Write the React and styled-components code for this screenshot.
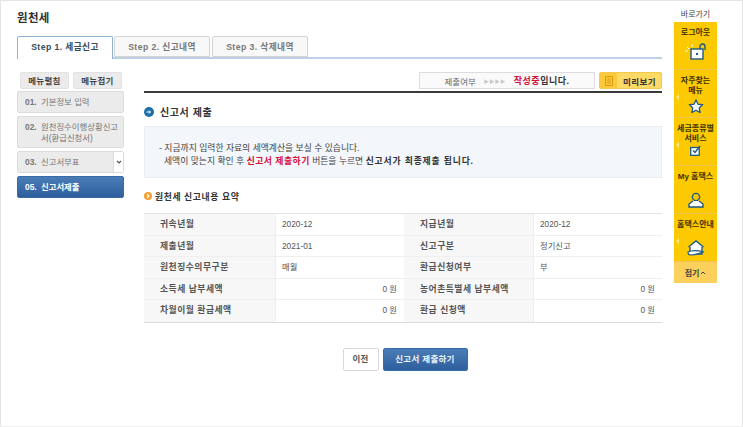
import React from "react";
import styled, { createGlobalStyle } from "styled-components";

const Global = createGlobalStyle`
  html, body { margin: 0; padding: 0; background: #fff; }
  body { font-family: "Liberation Sans", "Noto Sans CJK KR", sans-serif; font-size: 9px; color: #444; }
  * { box-sizing: border-box; }
`;

const Page = styled.div`
  width: 743px;
  height: 427px;
  border: 1px solid #e4e4e4;
  border-bottom-color: #eee;
  display: flex;
  overflow: hidden;
`;

const Main = styled.div`
  width: 661px;
  padding: 0 0 0 16px;
`;

const Title = styled.h1`
  margin: 10px 0 0;
  height: 15px;
  line-height: 15px;
  font-size: 11.5px;
  font-weight: 700;
  letter-spacing: 0.3px;
  color: #333;
`;

const Tabs = styled.div`
  display: flex;
  gap: 1px;
  margin-top: 10px;
  height: 23px;
  border-bottom: 2px solid #bcd0e6;
`;

const Tab = styled.div`
  width: 96px;
  margin-left: ${(p) => (p.$gap ? "1px" : "0")};
  height: ${(p) => (p.$active ? "23px" : "21px")};
  border: 1px solid ${(p) => (p.$active ? "#8fb2d6" : "#d4d4d4")};
  border-bottom: ${(p) => (p.$active ? "none" : "1px solid #d4d4d4")};
  border-radius: 2px 2px 0 0;
  background: ${(p) => (p.$active ? "#fff" : "#f8f8f8")};
  color: ${(p) => (p.$active ? "#3a4a5a" : "#777")};
  font-size: 8.7px;
  font-weight: 700;
  letter-spacing: 0.4px;
  text-align: center;
  line-height: 21px;
  white-space: nowrap;
`;

const Body = styled.div`
  display: flex;
  gap: 20px;
  margin-top: 13px;
`;

const Side = styled.div`
  width: 107px;
  flex: none;
  display: flex;
  flex-direction: column;
`;

const SideButtons = styled.div`
  display: flex;
  gap: 4px;
  padding-left: 3px;
  margin-bottom: 2px;
`;

const SideButton = styled.div`
  width: 49px;
  height: 17px;
  line-height: 16px;
  background: #ebebeb;
  border: 1px solid #e2e2e2;
  border-radius: 2px;
  text-align: center;
  font-size: 8.5px;
  font-weight: 700;
  letter-spacing: 0.3px;
  color: #444;
`;

const MenuItem = styled.div`
  position: relative;
  height: ${(p) => (p.$tall ? "32px" : "22px")};
  margin-bottom: 3px;
  padding: ${(p) => (p.$tall ? "5px 0 0 7px" : "0 2px 0 7px")};
  display: flex;
  align-items: ${(p) => (p.$tall ? "flex-start" : "center")};
  background: ${(p) => (p.$active ? "linear-gradient(#4a7cb6, #2e5f9d)" : "#ebebeb")};
  border: 1px solid ${(p) => (p.$active ? "#3b6ba6" : "#dcdcdc")};
  border-radius: 2px;
  color: ${(p) => (p.$active ? "#fff" : "#777")};
  font-size: 8.4px;
  font-weight: ${(p) => (p.$active ? 700 : 400)};
  line-height: 11px;
`;

const MenuNum = styled.span`
  flex: none;
  width: 16px;
  font-weight: 700;
`;

const MenuToggle = styled.span`
  position: absolute;
  top: 0;
  right: 0;
  bottom: 0;
  width: 10px;
  background: #fff;
  border-left: 1px solid #dcdcdc;
  display: flex;
  align-items: center;
  justify-content: center;
`;

const Content = styled.div`
  width: 518px;
  flex: none;
`;

const StatusRow = styled.div`
  display: flex;
  justify-content: flex-end;
  gap: 4px;
  height: 21px;
  padding-bottom: 3px;
  border-bottom: 2px solid #3a3a3a;
`;

const StatusBox = styled.div`
  width: 176px;
  height: 17px;
  border: 1px solid #ddd;
  background: #fafafa;
  display: flex;
  align-items: center;
  justify-content: center;
  gap: 8px;
  font-size: 8.5px;
  color: #666;
`;

const Arrows = styled.span`
  color: #c8c8c8;
  font-size: 5px;
  letter-spacing: 0.5px;
`;

const StatusText = styled.span`
  font-weight: 700;
  font-size: 9px;
  letter-spacing: 0.5px;
  color: #333;
`;

const Red = styled.span`
  color: #d5103c;
  font-weight: 700;
  letter-spacing: 0.5px;
`;

const Preview = styled.div`
  width: 63px;
  height: 17px;
  background: #fdd966;
  border: 1px solid #f3c94d;
  border-radius: 2px;
  display: flex;
  align-items: center;
  font-size: 8.5px;
  font-weight: 700;
  letter-spacing: 0.4px;
  color: #333;
`;

const PreviewIcon = styled.span`
  width: 17px;
  height: 15px;
  background: #fbc93a;
  display: flex;
  align-items: center;
  justify-content: center;
  margin-right: 6px;
`;

const Heading = styled.h2`
  margin: 11px 0 0;
  height: 15px;
  display: flex;
  align-items: center;
  gap: 6px;
  font-size: 10px;
  font-weight: 700;
  letter-spacing: 0.6px;
  color: #333;
`;

const NoticeBox = styled.div`
  margin-top: 7px;
  height: 52px;
  padding: 15px 0 0 14px;
  background: #f3f6fa;
  border: 1px solid #e9edf2;
  font-size: 8.8px;
  line-height: 13px;
  color: #444;
`;

const NoticeLine = styled.div`
  padding-left: ${(p) => (p.$indent ? "5px" : "0")};
  white-space: nowrap;
`;

const Strong = styled.b`
  color: #333;
  letter-spacing: 0.85px;
`;

const SubHeading = styled.h3`
  margin: 11px 0 0;
  height: 14px;
  display: flex;
  align-items: center;
  gap: 3px;
  font-size: 8.8px;
  font-weight: 700;
  letter-spacing: 0.6px;
  color: #333;
`;

const SummaryTable = styled.div`
  margin-top: 10px;
  border-top: 1px solid #e2e2e2;
  border-bottom: 1px solid #dcdcdc;
  display: grid;
  grid-template-columns: 131px 129px 129px 129px;
`;

const Label = styled.div`
  height: 21.6px;
  line-height: 21px;
  padding-left: 16px;
  background: #f7f7f7;
  border-bottom: ${(p) => (p.$last ? "none" : "1px solid #efefef")};
  font-size: 8.8px;
  font-weight: 700;
  letter-spacing: 0.5px;
  color: #555;
  white-space: nowrap;
`;

const Value = styled.div`
  height: 21.6px;
  line-height: 21px;
  padding: 0 7px 0 6px;
  background: #fff;
  border-bottom: ${(p) => (p.$last ? "none" : "1px solid #efefef")};
  border-left: 1px solid #efefef;
  font-size: 8.3px;
  color: #555;
  text-align: ${(p) => (p.$right ? "right" : "left")};
`;

const Actions = styled.div`
  margin-top: 25px;
  display: flex;
  justify-content: center;
  gap: 4px;
  padding-left: 4px;
`;

const Button = styled.div`
  height: 23px;
  line-height: 21px;
  width: ${(p) => (p.$primary ? "85px" : "36px")};
  border: 1px solid ${(p) => (p.$primary ? "#3b6ba6" : "#d8d8d8")};
  border-radius: 2px;
  background: ${(p) => (p.$primary ? "linear-gradient(#4a7cb6, #2e5f9d)" : "#fff")};
  color: ${(p) => (p.$primary ? "#eef4fb" : "#555")};
  text-align: center;
  font-size: 8.5px;
  font-weight: 700;
  letter-spacing: 0.3px;
`;

const QuickBar = styled.div`
  width: 43px;
  margin: 7px 0 0 12px;
  flex: none;
`;

const QuickTitle = styled.div`
  height: 14px;
  line-height: 14px;
  text-align: center;
  font-size: 8px;
  color: #444;
`;

const QuickItem = styled.div`
  position: relative;
  height: 48px;
  background: #fdc900;
  border-bottom: 1px solid #eec35a;
  padding-top: 6px;
  text-align: center;
  font-size: 8px;
  font-weight: 700;
  line-height: 10px;
  color: #3a3200;
  white-space: nowrap;
`;

const QuickIcon = styled.svg`
  position: absolute;
  left: 50%;
  bottom: ${(p) => p.$b}px;
  transform: translateX(-50%);
`;

const Pointer = styled.span`
  position: absolute;
  left: 2px;
  top: 24px;
  border: 3px solid transparent;
  border-left-width: 0;
  border-right: 3px solid #ffe98a;
`;

const Fold = styled.div`
  height: 21px;
  background: #fdd05c;
  display: flex;
  align-items: center;
  justify-content: center;
  gap: 1px;
  font-size: 8px;
  font-weight: 700;
  color: #444;
`;

const blue = "#1d5a85";

const rows = [
  ["귀속년월", "2020-12", "지급년월", "2020-12"],
  ["제출년월", "2021-01", "신고구분", "정기신고"],
  ["원천징수의무구분", "매월", "환급신청여부", "부"],
  ["소득세 납부세액", "0 원", "농어촌특별세 납부세액", "0 원", true],
  ["차월이월 환급세액", "0 원", "환급 신청액", "0 원", true],
];

export default function App() {
  return (
    <Page>
      <Global />
      <Main>
        <Title>원천세</Title>
        <Tabs>
          <Tab $active>Step 1. 세금신고</Tab>
          <Tab>Step 2. 신고내역</Tab>
          <Tab $gap>Step 3. 삭제내역</Tab>
        </Tabs>
        <Body>
          <Side>
            <SideButtons>
              <SideButton>메뉴펼침</SideButton>
              <SideButton>메뉴접기</SideButton>
            </SideButtons>
            <MenuItem><MenuNum>01.</MenuNum>기본정보 입력</MenuItem>
            <MenuItem $tall><MenuNum>02.</MenuNum><span>원천징수이행상황신고서(환급신청서)</span></MenuItem>
            <MenuItem>
              <MenuNum>03.</MenuNum>신고서부표
              <MenuToggle>
                <svg width="6" height="4" viewBox="0 0 6 4"><path d="M1 1l2 2 2-2" fill="none" stroke="#555" strokeWidth="1.2" /></svg>
              </MenuToggle>
            </MenuItem>
            <MenuItem $active><MenuNum>05.</MenuNum>신고서제출</MenuItem>
          </Side>
          <Content>
            <StatusRow>
              <StatusBox>
                <span>제출여부</span>
                <Arrows>▶▶▶▶</Arrows>
                <StatusText><Red>작성중</Red>입니다.</StatusText>
              </StatusBox>
              <Preview>
                <PreviewIcon>
                  <svg width="8" height="10" viewBox="0 0 8 10"><path d="M.5.5h7v9h-7zM2 3h4M2 5h4M2 7h4" fill="none" stroke="#d99a10" /></svg>
                </PreviewIcon>
                미리보기
              </Preview>
            </StatusRow>
            <Heading>
              <svg width="10" height="10" viewBox="0 0 10 10">
                <circle cx="5" cy="5" r="5" fill="#1f6fa8" />
                <path d="M2.5 5h4M5 3.5L6.5 5 5 6.5" fill="none" stroke="#fff" strokeWidth="1" />
              </svg>
              신고서 제출
            </Heading>
            <NoticeBox>
              <NoticeLine>- 지금까지 입력한 자료의 세액계산을 보실 수 있습니다.</NoticeLine>
              <NoticeLine $indent>세액이 맞는지 확인 후 <Red>신고서 제출하기</Red> 버튼을 누르면 <Strong>신고서가 최종제출 됩니다.</Strong></NoticeLine>
            </NoticeBox>
            <SubHeading>
              <svg width="8" height="8" viewBox="0 0 8 8">
                <circle cx="4" cy="4" r="4" fill="#f0a030" />
                <path d="M3 2l2 2-2 2" fill="none" stroke="#fff" strokeWidth="1.1" />
              </svg>
              원천세 신고내용 요약
            </SubHeading>
            <SummaryTable>
              {rows.map((r, i) => (
                <React.Fragment key={r[0]}>
                  <Label $last={i === 4}>{r[0]}</Label>
                  <Value $last={i === 4} $right={r[4]}>{r[1]}</Value>
                  <Label $last={i === 4}>{r[2]}</Label>
                  <Value $last={i === 4} $right={r[4]}>{r[3]}</Value>
                </React.Fragment>
              ))}
            </SummaryTable>
            <Actions>
              <Button>이전</Button>
              <Button $primary>신고서 제출하기</Button>
            </Actions>
          </Content>
        </Body>
      </Main>
      <QuickBar>
        <QuickTitle>바로가기</QuickTitle>
        <QuickItem>
          로그아웃
          <QuickIcon $b={9} width="22" height="17" viewBox="0 0 22 17">
            <rect x="6" y="6" width="12" height="10" fill="#fff" stroke={blue} strokeWidth="1.4" />
            <rect x="11" y="10" width="2" height="2" fill={blue} />
            <path d="M15 6V3.5a2.5 2.5 0 0 1 5 0V7" fill="none" stroke={blue} strokeWidth="1.4" />
            <path d="M0 8h3M2 4l2 2M7 1v3" stroke="#fff" strokeWidth="1" />
          </QuickIcon>
        </QuickItem>
        <QuickItem>
          자주찾는<br />메뉴
          <Pointer />
          <QuickIcon $b={4} width="15" height="14" viewBox="0 0 15 14">
            <path d="M7.5 1l2 4.2 4.6.6-3.4 3.2.9 4.5-4.1-2.3-4.1 2.3.9-4.5L.9 5.8l4.6-.6z" fill="#fff" stroke={blue} strokeWidth="1.3" />
          </QuickIcon>
        </QuickItem>
        <QuickItem>
          세금종류별<br />서비스
          <Pointer />
          <QuickIcon $b={9} width="12" height="11" viewBox="0 0 12 11">
            <rect x=".7" y="2.5" width="8.5" height="7.8" fill="#fff" stroke={blue} strokeWidth="1.3" />
            <path d="M3 5.5l2 2 5-6.5" fill="none" stroke={blue} strokeWidth="1.4" />
          </QuickIcon>
        </QuickItem>
        <QuickItem>
          My 홈택스
          <QuickIcon $b={5} width="16" height="16" viewBox="0 0 16 16">
            <circle cx="8" cy="5" r="3.6" fill="#fdc900" stroke={blue} strokeWidth="1.4" />
            <path d="M5 9L1 12v3h14v-3l-4-3" fill="#fff" stroke={blue} strokeWidth="1.4" />
          </QuickIcon>
        </QuickItem>
        <QuickItem>
          홈택스안내
          <Pointer />
          <QuickIcon $b={5} width="18" height="16" viewBox="0 0 18 16">
            <path d="M1.5 7L9 1l7.5 6" fill="#fff" stroke={blue} strokeWidth="1.4" />
            <path d="M3 7v7h12V7" fill="#fff" stroke={blue} strokeWidth="1.4" />
            <path d="M1 12c4-2 9-2 16 0-6 1-7 3-13 3-2 0-3-1-3-3z" fill="#fff" stroke={blue} strokeWidth="1.2" />
          </QuickIcon>
        </QuickItem>
        <Fold>
          접기
          <svg width="6" height="4" viewBox="0 0 6 4"><path d="M1 3l2-2 2 2" fill="none" stroke="#444" strokeWidth="1" /></svg>
        </Fold>
      </QuickBar>
    </Page>
  );
}
